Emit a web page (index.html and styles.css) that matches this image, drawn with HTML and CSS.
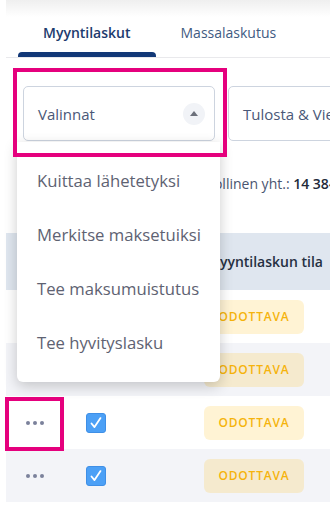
FILE: index.html
```html
<!DOCTYPE html>
<html lang="fi">

<head>
    <meta charset="UTF-8">
    <meta name="viewport" content="width=device-width, initial-scale=1.0">
    <title>Myyntilaskut</title>
    <link rel="stylesheet" href="styles.css">
</head>

<body>
    <div class="panel">
        <nav class="tabs">
            <a class="tab active">Myyntilaskut</a>
            <a class="tab">Massalaskutus</a>
        </nav>

        <div class="toolbar">
            <div class="select-wrap">
                <div class="select">
                    <span>Valinnat</span>
                    <span class="caret"></span>
                </div>
                <ul class="menu">
                    <li>Kuittaa lähetetyksi</li>
                    <li>Merkitse maksetuiksi</li>
                    <li>Tee maksumuistutus</li>
                    <li>Tee hyvityslasku</li>
                </ul>
            </div>
            <div class="select wide">
                <span>Tulosta &amp; Vie</span>
            </div>
        </div>

        <div class="summary">Verollinen yht.: <b>14 384,00 €</b></div>

        <table class="invoices">
            <thead>
                <tr>
                    <th class="col-actions"></th>
                    <th class="col-check"></th>
                    <th class="col-status">Myyntilaskun tila</th>
                </tr>
            </thead>
            <tbody>
                <tr>
                    <td><span class="dots"><i></i><i></i><i></i></span></td>
                    <td><span class="checkbox"></span></td>
                    <td><span class="badge">ODOTTAVA</span></td>
                </tr>
                <tr>
                    <td><span class="dots"><i></i><i></i><i></i></span></td>
                    <td><span class="checkbox"></span></td>
                    <td><span class="badge">ODOTTAVA</span></td>
                </tr>
                <tr>
                    <td><span class="dots"><i></i><i></i><i></i></span></td>
                    <td><span class="checkbox checked"><svg viewBox="0 0 20 20" width="20" height="20"><path d="M5.5 10.5l3 3.6 6-9" fill="none" stroke="#fff" stroke-width="1.8" stroke-linecap="round" stroke-linejoin="round"/></svg></span></td>
                    <td><span class="badge">ODOTTAVA</span></td>
                </tr>
                <tr>
                    <td><span class="dots"><i></i><i></i><i></i></span></td>
                    <td><span class="checkbox checked"><svg viewBox="0 0 20 20" width="20" height="20"><path d="M5.5 10.5l3 3.6 6-9" fill="none" stroke="#fff" stroke-width="1.8" stroke-linecap="round" stroke-linejoin="round"/></svg></span></td>
                    <td><span class="badge">ODOTTAVA</span></td>
                </tr>
            </tbody>
        </table>
    </div>

    <div class="mark mark-menu"></div>
    <div class="mark mark-row"></div>
</body>

</html>
```

FILE: styles.css
```css
body {
    margin: 0;
    font-family: "Open Sans", "Liberation Sans", sans-serif;
    background: #fff;
    overflow: hidden;
}

.panel {
    margin-left: 6px;
    width: 900px;
    background: linear-gradient(#efefef, #fff 17px, #fff);
}

.tabs {
    display: flex;
    padding-left: 12px;
    border-bottom: 1px solid #e9e9ec;
}

.tab {
    position: relative;
    padding: 23px 25px 14px;
    font-size: 14px;
    line-height: 20px;
    color: #3f5b82;
}

.tab.active {
    color: #1d3b6e;
    font-weight: 600;
}

.tab.active::after {
    content: "";
    position: absolute;
    left: 0;
    right: 0;
    bottom: 0;
    height: 5px;
    background: #123877;
    border-radius: 4px 4px 0 0;
}

.toolbar {
    display: flex;
    gap: 13px;
    padding: 28px 0 0 17px;
}

.select-wrap {
    position: relative;
}

.select {
    box-sizing: border-box;
    display: flex;
    align-items: center;
    justify-content: space-between;
    width: 192px;
    height: 55px;
    padding: 0 9px 0 14px;
    border: 1px solid #cdd4df;
    border-radius: 5px;
    font-size: 15px;
    color: #4a5878;
}

.select.wide {
    width: 220px;
}

.caret {
    display: flex;
    align-items: center;
    justify-content: center;
    width: 22px;
    height: 22px;
    border-radius: 50%;
    background: #f1f3f7;
}

.caret::before {
    content: "";
    border-left: 4px solid transparent;
    border-right: 4px solid transparent;
    border-bottom: 5px solid #6c707b;
    margin-top: -1px;
}

.menu {
    position: absolute;
    top: 56px;
    left: -6px;
    z-index: 2;
    width: 203px;
    margin: 0;
    padding: 12px 0;
    list-style: none;
    background: #fff;
    border-radius: 0 0 6px 6px;
    box-shadow: 0 4px 14px rgba(0, 0, 0, 0.2);
}

.menu li {
    padding-left: 20px;
    line-height: 54px;
    font-size: 16.7px;
    color: #5e6272;
    white-space: nowrap;
}

.summary {
    margin-top: 33px;
    padding-left: 186px;
    font-size: 14px;
    line-height: 20px;
    color: #4a5570;
}

.summary b {
    color: #222a3a;
    font-weight: 600;
}

.invoices {
    margin-top: 39px;
    width: 100%;
    border-collapse: collapse;
}

.invoices th {
    height: 57px;
    padding: 0;
    text-align: left;
    font-size: 14px;
    font-weight: 600;
    color: #263042;
    background: #dfe6ef;
}

.invoices th.col-status {
    padding-left: 3px;
}

.invoices td {
    height: 53px;
    padding: 0;
}

.invoices tbody tr:nth-child(even) td {
    background: #f3f4f8;
}

.col-actions {
    width: 58px;
}

.col-check {
    width: 140px;
}

.dots {
    display: flex;
    justify-content: center;
    gap: 3px;
}

.dots i {
    width: 4px;
    height: 4px;
    border-radius: 50%;
    background: #7b819b;
}

.checkbox {
    display: block;
    box-sizing: border-box;
    width: 20px;
    height: 20px;
    margin-left: 22px;
    border: 1px solid #b9c2d0;
    border-radius: 3px;
    background: #fff;
}

.checkbox.checked {
    border-color: #3f8fe6;
    background: #4ca0f6;
}

.checkbox svg {
    display: block;
    margin: -1px;
}

.badge {
    display: inline-flex;
    align-items: center;
    justify-content: center;
    width: 100px;
    height: 34px;
    border-radius: 6px;
    background: rgba(255, 193, 40, 0.2);
    color: #f5b30c;
    font-size: 12px;
    font-weight: 600;
    letter-spacing: 0.8px;
}

.mark {
    position: absolute;
    box-sizing: border-box;
    border: 4px solid #e5007d;
    z-index: 5;
}

.mark-menu {
    left: 13px;
    top: 68px;
    width: 214px;
    height: 89px;
}

.mark-row {
    left: 5px;
    top: 397px;
    width: 59px;
    height: 54px;
}
```
